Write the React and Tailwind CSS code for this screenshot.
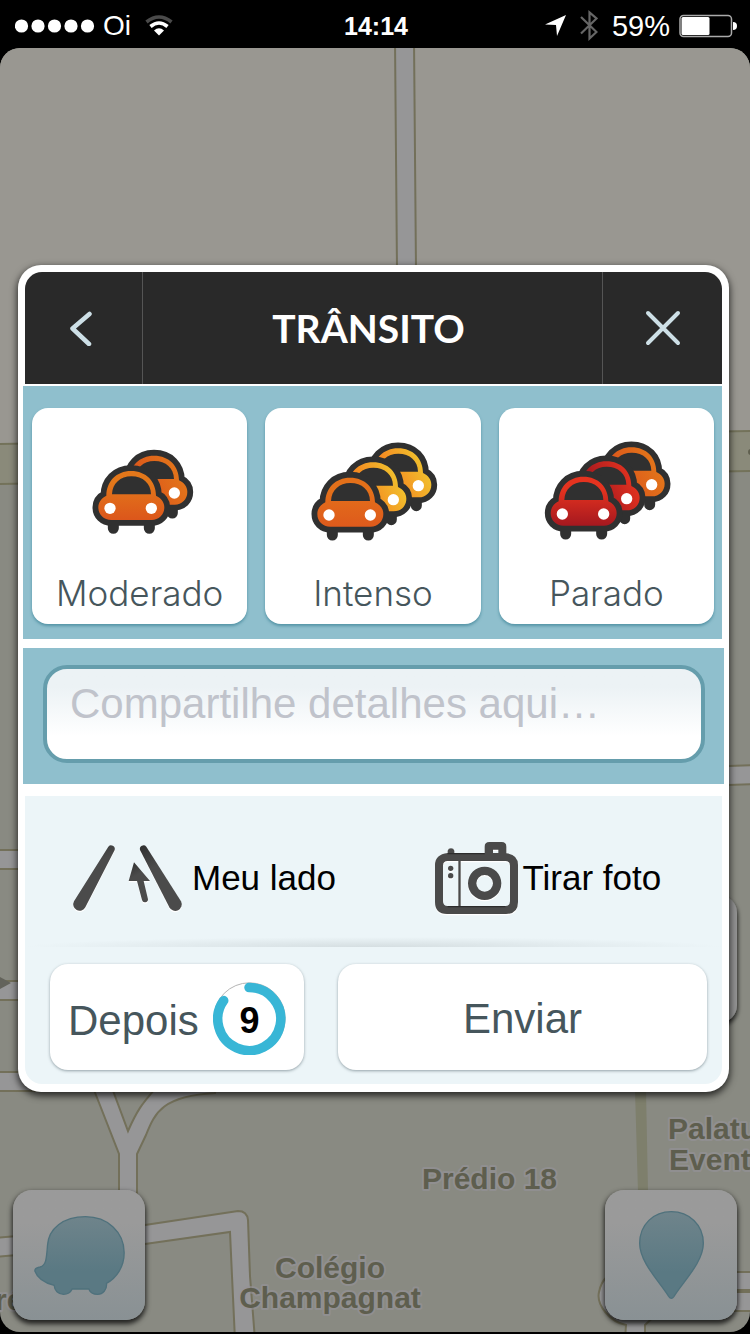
import React from "react";

const ORANGE = ["#e3771a", "#dc561b"];
const AMBER = ["#f0c52e", "#f5801f"];
const RED = ["#e5331f", "#a5181f"];
const DEEP_ORANGE = ["#e3701a", "#de5a1c"];

const OUTLINE =
  "M275 360 C252 360 236 344 236 322 C236 306 246 294 260 287 C260 245 290 213 334 213 C380 213 409 245 409 287 C424 294 434 306 434 322 C434 344 418 360 396 360 Z";
const WINDOW = "M277 283 C278 250 302 229 335 229 C370 229 393 250 394 283 Z";

function Car({ id, x, y, colors, front }) {
  return (
    <g transform={`translate(${x} ${y})`}>
      <linearGradient id={id} x1={front ? 0 : 1} y1={front ? 0.25 : 0.5} x2={front ? 0 : 0.35} y2={front ? 1 : 0.75}>
        <stop offset="0" stopColor={colors[0]} />
        <stop offset="1" stopColor={colors[1]} />
      </linearGradient>
      <path d="M281 365 V385 M389 365 V385" stroke="#303030" strokeWidth="33" strokeLinecap="round" />
      <path d={OUTLINE} fill="#303030" stroke="#303030" strokeWidth="35" strokeLinejoin="round" />
      <path d={OUTLINE} fill={`url(#${id})`} />
      <path d={WINDOW} fill="#303030" />
      <circle cx="271" cy="325" r="17" fill="#fff" />
      <circle cx="395" cy="325" r="17" fill="#fff" />
    </g>
  );
}

function CarStack({ name, x, y, cars }) {
  const offsets = [[0, 0], [69, -46], [144, -88]];
  return (
    <svg viewBox="0 0 378 294" className="h-[98px] w-[126px] overflow-visible" aria-hidden="true">
      {cars
        .map((colors, i) => (
          <Car key={i} id={`${name}-${i}`} x={x + offsets[i][0]} y={y + offsets[i][1]} colors={colors} front={i === 0} />
        ))
        .reverse()}
    </svg>
  );
}

const LEVELS = [
  { label: "Moderado", x: -172, y: -129, cars: [ORANGE, ORANGE] },
  { label: "Intenso", x: -214, y: -109, cars: [DEEP_ORANGE, AMBER, AMBER] },
  { label: "Parado", x: -213, y: -112, cars: [RED, RED, ORANGE] },
];

function StatusBar() {
  return (
    <header className="flex h-12 items-center pl-[15px] pr-[13px] pt-[3px] text-white">
      <div className="flex flex-1 items-center">
        <svg viewBox="0 0 80 14" className="h-[14px] w-20" fill="#fff" aria-hidden="true">
          <circle cx="6.5" cy="7" r="6.6" />
          <circle cx="23" cy="7" r="6.6" />
          <circle cx="39.5" cy="7" r="6.6" />
          <circle cx="56" cy="7" r="6.6" />
          <circle cx="72.5" cy="7" r="6.6" />
        </svg>
        <span className="ml-2 text-[28px] leading-8">Oi</span>
        <svg viewBox="0 0 28 21" className="ml-[14px] h-[21px] w-7" fill="none" aria-hidden="true">
          <path d="M1.500 7 Q14 -3 26.500 7" stroke="#4a4a4a" strokeWidth="3.600" />
          <path d="M5.500 11.500 Q14 4.500 22.500 11.500" stroke="#fff" strokeWidth="3.600" />
          <path d="M9 15.500 Q14 11 19 15.500 L14 20.500 Z" fill="#fff" />
        </svg>
      </div>
      <time className="text-[25px] font-bold leading-8">14:14</time>
      <div className="flex flex-1 items-center justify-end">
        <svg viewBox="0 0 21 21" className="h-[21px] w-[21px]" fill="#fff" aria-hidden="true">
          <path d="M0 9.500 L21 0 L12 21 L11 10 Z" />
        </svg>
        <svg viewBox="0 0 18 31" className="ml-[14px] h-[31px] w-[18px]" fill="none" stroke="#666" strokeWidth="2.200" aria-hidden="true">
          <path d="M1 7 L16.500 22 L9.500 28.500 V2.500 L16.500 8.500 L1 23.500" />
        </svg>
        <span className="ml-[14px] text-[29px] leading-8">59%</span>
        <svg viewBox="0 0 58 24" className="ml-[9px] h-6 w-[58px]" aria-hidden="true">
          <rect x="1" y="1.500" width="51.500" height="21" rx="3.500" fill="none" stroke="#aaa" strokeWidth="1.500" />
          <rect x="2.500" y="3" width="28" height="18" rx="1.500" fill="#fff" />
          <path d="M54 8 Q58 8 58 12 Q58 16 54 16 Z" fill="#fff" />
        </svg>
      </div>
    </header>
  );
}

function MapCanvas() {
  return (
    <svg viewBox="0 48 750 1284" preserveAspectRatio="xMidYMin slice" className="absolute inset-0 h-full w-full" aria-hidden="true">
      <defs>
        <filter id="drop" x="-20%" y="-20%" width="140%" height="140%">
          <feDropShadow dx="1" dy="3" stdDeviation="2" floodColor="#000" floodOpacity="0.7" />
        </filter>
      </defs>
      <rect x="0" y="48" width="750" height="1290" fill="#898a82" />
      <path d="M0 48 H750 V431 L0 444 Z" fill="#999791" />
      <path d="M-5 444 L755 431 V471 L-5 484 Z" fill="#8a8a7a" stroke="#73725a" strokeWidth="2" />
      <circle cx="751" cy="452" r="3" fill="#5f5f4f" />
      <g fill="#969697" stroke="#73705a" strokeWidth="2">
        <path d="M395 40 L397 270 H416 L414 40 Z" />
        <path d="M-5 850 H40 V869 H-5 Z" />
        <path d="M-5 981 H40 V1000 H-5 Z" />
        <path d="M700 767 L760 765 V784 L700 786 Z" />
        <path d="M-5 1072 H60 V1091 H-5 Z" />
        <path d="M94 1090 L119 1154 V1200 H137 V1154 L146 1135 C155 1112 163 1096 215 1093 V1080 L160 1083 C144 1102 139 1106 128 1131 L112 1088 Z" />
        <path d="M-5 1238 L145 1225 L238 1211 Q247 1211 248 1220 L250 1276 L255 1340 H235 L232 1276 L230 1232 L145 1244 L-5 1257 Z" />
        <path d="M625 1340 L626 1325 C610 1322 596 1305 599 1292 C602 1278 608 1273 625 1272 H760 V1311 H660 L645 1325 V1340 Z" />
      </g>
      <path d="M735 1291 H750" stroke="#73705a" strokeWidth="4" />
      <path d="M0 977 L11 983 L0 989 Z" fill="#63635b" />
      <path d="M635 1090 H646 L648 1192 H638 Z" fill="#7e7f6c" />
      <rect x="610" y="895" width="127" height="128" rx="18" fill="#939393" filter="url(#drop)" />
      <g
        className="font-['Liberation_Sans',Arial,sans-serif] text-[30px] font-bold"
        fill="#5e5e4e"
        stroke="#96939a"
        strokeWidth="4"
        strokeLinejoin="round"
        paintOrder="stroke"
        strokeOpacity="0.6"
      >
        <text x="422" y="1189">Prédio 18</text>
        <text x="668" y="1139">Palatus</text>
        <text x="669" y="1170">Eventos</text>
        <text x="330" y="1278" textAnchor="middle">Colégio</text>
        <text x="330" y="1308" textAnchor="middle">Champagnat</text>
        <text x="-25" y="1310">Pré</text>
      </g>
    </svg>
  );
}

const DIVIDER = "border-[#555]";
const WHITE_BUTTON =
  "flex h-[106px] cursor-pointer items-center rounded-[18px] bg-white pt-[3px] text-[42px] leading-[48px] text-[#46565c] shadow-[0_1px_3px_rgba(60,80,90,0.5)]";
const MAP_BUTTON =
  "flex h-[130px] w-[132px] cursor-pointer items-center justify-center rounded-[19px] bg-linear-to-b from-[#9a9a9a] from-25% to-[#899194] shadow-[0_3px_5px_1px_rgba(0,0,0,0.75)]";

function ReportPanel() {
  return (
    <section
      aria-labelledby="report-title"
      className="relative mt-[217px] mr-[21px] ml-[18px] rounded-[23px] bg-white px-[5px] pt-[7px] pb-2 shadow-[0_3px_7px_1px_rgba(0,0,0,0.7)]"
    >
      <div className="mr-[2px] ml-[2px] flex h-[112px] items-stretch overflow-hidden rounded-t-[17px] bg-[#292929]">
        <button type="button" aria-label="Voltar" className={`flex w-[118px] cursor-pointer items-center justify-center border-r pr-[6px] ${DIVIDER}`}>
          <svg viewBox="0 0 22 36" className="h-9 w-[22px]" fill="none" stroke="#cddfe6" strokeWidth="4.500" strokeLinecap="round" strokeLinejoin="round" aria-hidden="true">
            <path d="M19.500 4 L2.500 18.500 L19 34" />
          </svg>
        </button>
        <h1 id="report-title" className="flex flex-1 items-center justify-center pr-2 font-[Lato,sans-serif] text-[39px] font-bold leading-[48px] text-white">
          TRÂNSITO
        </h1>
        <button type="button" aria-label="Fechar" className={`flex w-[120px] cursor-pointer items-center justify-center border-l ${DIVIDER}`}>
          <svg viewBox="0 0 36 36" className="h-9 w-9" fill="none" stroke="#cddfe6" strokeWidth="4" strokeLinecap="round" aria-hidden="true">
            <path d="M3 3 L33 33 M33 3 L3 33" />
          </svg>
        </button>
      </div>

      <div className="mt-[2px] mr-[2px] grid grid-cols-3 gap-[18px] bg-[#8fbfcd] pt-[22px] pr-2 pb-[15px] pl-[9px]">
        {LEVELS.map((level) => (
          <button
            key={level.label}
            type="button"
            className="flex h-[216px] cursor-pointer flex-col items-center rounded-2xl bg-white pt-[35px] shadow-[0_2px_3px_rgba(60,130,150,0.7)]"
          >
            <CarStack name={level.label} x={level.x} y={level.y} cars={level.cars} />
            <span className="mt-8 font-[Inter,'Liberation_Sans',sans-serif] text-[35px] font-light leading-[40px] text-[#46565c]">{level.label}</span>
          </button>
        ))}
      </div>

      <div className="mt-[9px] flex bg-[#8fbfcd] pt-[17px] pr-[19px] pb-[21px] pl-5">
        <textarea
          aria-label="Detalhes"
          placeholder="Compartilhe detalhes aqui…"
          className="h-[98px] w-full resize-none overflow-hidden rounded-[24px] border-4 border-[#659dac] bg-linear-to-b from-[#ecf2f5] from-20% to-white to-75% px-[23px] pt-[11px] text-[42px] leading-[48px] text-[#46565c] outline-none placeholder:text-[#c0c3cb] placeholder:opacity-100"
        />
      </div>

      <div className="mt-3 mr-[2px] ml-[2px] rounded-b-[17px] bg-[#ecf5f8]">
        <div className="grid h-[151px] grid-cols-2 pt-[13px] text-[35px] leading-10 text-black">
          <button type="button" className="flex cursor-pointer items-center pl-12">
            <svg viewBox="219 135 327 198" className="h-[66px] w-[109px] overflow-visible" aria-hidden="true">
              <defs>
                <linearGradient id="ink" x1="0" y1="0" x2="0.3" y2="1">
                  <stop offset="0" stopColor="#2f2f2f" />
                  <stop offset="0.4" stopColor="#4b4b4b" />
                </linearGradient>
                <g id="lane">
                  <path d="M325 140 A11 11 0 0 1 344 150 L256 322 A19 19 0 0 1 222 304 Z" />
                  <path d="M420 150 A11 11 0 0 1 439 140 L543 304 A19 19 0 0 1 508 322 Z" />
                  <path d="M402 187 L450 243 L431 243 L444 298 Q444 306 436 307 Q428 308 426 300 L411 243 L386 243 Z" />
                </g>
              </defs>
              <use href="#lane" fill="#fff" y="4" />
              <use href="#lane" fill="url(#ink)" />
            </svg>
            <span className="ml-[10px]">Meu lado</span>
          </button>
          <button type="button" className="flex cursor-pointer items-center pl-[61px]">
            <svg viewBox="180 246 249 219" className="h-[73px] w-[83px] overflow-visible" aria-hidden="true">
              <defs>
                <g id="camera">
                  <path
                    fillRule="evenodd"
                    d="M218 279 V272 Q220 265 228 265 Q236 265 238 272 V279 H329 V260 Q329 246 343 246 H380 Q394 246 394 260 V280 Q429 284 429 315 V426 Q429 462 393 462 H216 Q180 462 180 426 V315 Q180 284 218 279 Z M218 303 Q204 303 204 317 V424 Q204 438 218 438 H391 Q405 438 405 424 V317 Q405 303 391 303 Z M354 269 V279 H370 V269 Z"
                  />
                  <path d="M250 300 H257 V440 H250 Z" />
                  <path fillRule="evenodd" d="M279 370 A50 50 0 0 1 379 370 A50 50 0 0 1 279 370 Z M304 370 A25 25 0 0 0 354 370 A25 25 0 0 0 304 370 Z" />
                  <circle cx="227" cy="325" r="8" />
                  <circle cx="227" cy="347" r="8" />
                </g>
              </defs>
              <use href="#camera" fill="#fff" y="4" />
              <use href="#camera" fill="#4a4a4a" />
              <path d="M218 281 H329 M218 440 H391" stroke="#2c2c2c" strokeWidth="4" />
            </svg>
            <span className="ml-[5px]">Tirar foto</span>
          </button>
        </div>
        <hr className="-mt-[10px] h-[10px] border-0 bg-[radial-gradient(50%_100%_at_50%_100%,#d5dee1,#ecf5f8)]" />
        <div className="flex gap-[34px] pt-[17px] pr-[15px] pb-[14px] pl-[25px]">
          <button type="button" className={`${WHITE_BUTTON} w-[254px] justify-between pr-[18px] pl-[18px]`}>
            <span className="pt-1">Depois</span>
            <span className="relative flex h-[73px] w-[73px] items-center justify-center">
              <svg viewBox="0 0 73 73" className="absolute inset-0 h-full w-full" fill="none" aria-hidden="true">
                <circle cx="36.500" cy="36.500" r="35.700" stroke="#b5b5b5" />
                <path d="M36 5.500 A31.500 31.500 0 1 1 10.700 18.600" stroke="#38b6d6" strokeWidth="9.500" strokeLinecap="round" />
              </svg>
              <span className="relative pt-1 text-[36px] font-bold leading-10 text-black">9</span>
            </span>
          </button>
          <button type="button" className={`${WHITE_BUTTON} flex-1 justify-center`}>
            Enviar
          </button>
        </div>
      </div>
    </section>
  );
}

function MapControls() {
  return (
    <div className="relative mt-auto flex justify-between px-[13px] pt-5 pb-3">
      <button type="button" aria-label="Menu" className={MAP_BUTTON}>
        <svg viewBox="98 402 272 237" className="h-[79px] w-[91px]" aria-hidden="true">
          <linearGradient id="steel" x1="0" y1="0" x2="0" y2="1">
            <stop offset="0" stopColor="#6f848b" />
            <stop offset="0.7" stopColor="#5a7983" />
          </linearGradient>
          <path
            fill="url(#steel)"
            stroke="#4f717c"
            strokeWidth="4"
            d="M138 490 C141 440 185 404 252 404 C318 404 368 450 368 512 C368 555 345 588 315 604 C317 622 305 637 288 637 C276 637 266 632 262 621 L212 621 C207 632 198 637 186 637 C170 637 159 626 158 610 C130 603 107 587 100 567 C100 557 108 557 116 555 C134 550 135 530 138 490 Z"
          />
        </svg>
      </button>
      <button type="button" aria-label="Reportar" className={MAP_BUTTON}>
        <svg viewBox="791 391 195 264" className="h-[88px] w-[65px]" aria-hidden="true">
          <path
            fill="url(#steel)"
            stroke="#4f717c"
            strokeWidth="4"
            d="M888 653 Q884 653 880 647 C852 602 793 545 793 488 C793 431 835 393 888 393 C941 393 984 432 984 488 C984 545 924 602 896 647 Q892 653 888 653 Z"
          />
        </svg>
      </button>
    </div>
  );
}

export default function App() {
  return (
    <div className="flex min-h-screen flex-col bg-black pb-[2px] font-['Liberation_Sans',Arial,sans-serif]">
      <StatusBar />
      <main className="relative flex flex-1 flex-col overflow-hidden rounded-[20px]">
        <MapCanvas />
        <ReportPanel />
        <MapControls />
      </main>
    </div>
  );
}
